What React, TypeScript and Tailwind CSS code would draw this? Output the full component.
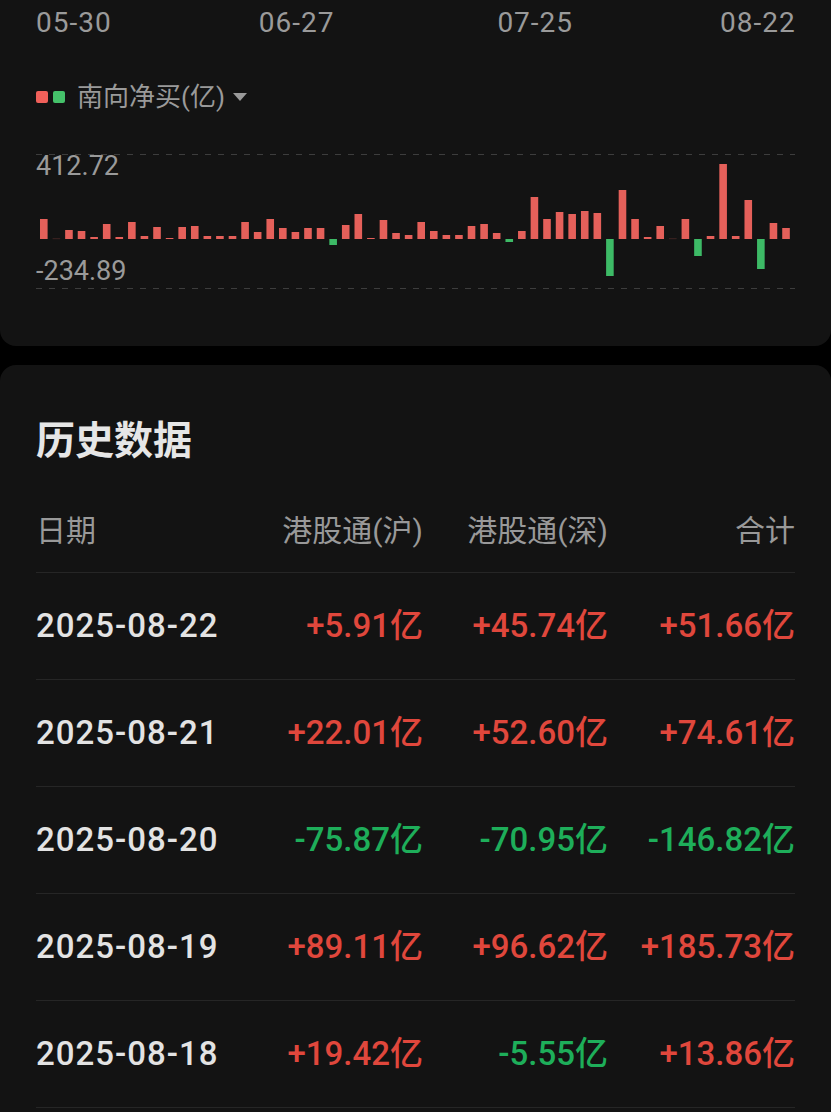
const FONT = "font-['Roboto','Noto_Sans_CJK_SC',sans-serif]";

// bar heights in px above (+) / below (-) the zero line, left to right
const BARS = [
  20, 0, 9, 8, 2, 15, 2, 17, 3, 12, 1, 12, 13, 3, 3, 3, 17, 7, 20, 11,
  7, 11, 11, -6, 14, 25, 1, 19, 6, 4, 17, 8, 4, 4, 13, 15, 6, -3, 8, 42,
  20, 27, 25, 28, 26, -37, 49, 20, 2, 13, 0, 20, -17, 3, 75, 3, 39, -30, 16, 11,
];

const ROWS = [
  { date: "2025-08-22", sh: "+5.91亿", sz: "+45.74亿", total: "+51.66亿" },
  { date: "2025-08-21", sh: "+22.01亿", sz: "+52.60亿", total: "+74.61亿" },
  { date: "2025-08-20", sh: "-75.87亿", sz: "-70.95亿", total: "-146.82亿" },
  { date: "2025-08-19", sh: "+89.11亿", sz: "+96.62亿", total: "+185.73亿" },
  { date: "2025-08-18", sh: "+19.42亿", sz: "-5.55亿", total: "+13.86亿" },
];

function valueColor(v: string) {
  return v.startsWith("-") ? "text-[#1eae5a]" : "text-[#e0473c]";
}

function Chart() {
  const zero = 89;
  return (
    <div className="relative mt-[38px] h-[142px] w-[759px]">
      <svg width="759" height="142" viewBox="0 0 759 142" className="block">
        <line x1="0" y1="4.5" x2="759" y2="4.5" stroke="#3d3d3d" strokeWidth="1" strokeDasharray="6 7" />
        <line x1="0" y1="138.5" x2="759" y2="138.5" stroke="#3d3d3d" strokeWidth="1" strokeDasharray="6 7" />
        {BARS.map((h, i) => {
          const x = 4 + i * 12.58;
          if (h === 0) {
            return <rect key={i} x={x} y={zero - 0.5} width={7.6} height={0.6} fill="#5a2f2c" />;
          }
          return h > 0 ? (
            <rect key={i} x={x} y={zero - h} width={7.6} height={h} fill="#e5605a" />
          ) : (
            <rect key={i} x={x} y={zero} width={7.6} height={-h} fill="#3dba66" />
          );
        })}
      </svg>
      <span className="absolute left-0 top-[3px] text-[27px] leading-none text-[#9a9a9a]">412.72</span>
      <span className="absolute left-0 top-[108px] text-[27px] leading-none text-[#9a9a9a]">-234.89</span>
    </div>
  );
}

export default function App() {
  return (
    <div className={`h-[1112px] w-[831px] overflow-hidden bg-black ${FONT}`}>
      {/* Chart card */}
      <div className="h-[346px] rounded-b-[16px] bg-[#131313] px-[36px]">
        <div className="flex h-[46px] items-center whitespace-nowrap text-[28px] leading-none tracking-[1px] text-[#9a9a9a]">
          <span className="shrink-0">05-30</span>
          <span className="ml-[147px] shrink-0">06-27</span>
          <span className="ml-[163px] shrink-0">07-25</span>
          <span className="ml-[147px] shrink-0">08-22</span>
        </div>

        <div className="mt-[36px] flex h-[30px] items-center">
          <span className="h-[12px] w-[12px] rounded-[2px] bg-[#f0605a]" />
          <span className="ml-[5px] h-[12px] w-[12px] rounded-[2px] bg-[#45c26a]" />
          <span className="ml-[12px] text-[26px] leading-none text-[#9a9a9a]">南向净买(亿)</span>
          <svg width="14" height="8" viewBox="0 0 14 8" className="ml-[8px]">
            <path d="M0 0 H14 L7 8 Z" fill="#9a9a9a" />
          </svg>
        </div>

        <Chart />
      </div>

      {/* History card */}
      <div className="mt-[19px] h-[760px] rounded-t-[16px] bg-[#131313] px-[36px]">
        <div className="flex h-[124px] items-end pb-[32px]">
          <h2 className="font-['Noto_Sans_CJK_SC',sans-serif] text-[39px] font-bold leading-[40px] text-[#e6e6e6]">
            历史数据
          </h2>
        </div>

        <div className="grid h-[84px] grid-cols-[202px_185px_185px_187px] items-center border-b border-[#262626] text-[30px] text-[#999999]">
          <span>日期</span>
          <span className="text-right">港股通(沪)</span>
          <span className="text-right">港股通(深)</span>
          <span className="text-right">合计</span>
        </div>

        {ROWS.map((r) => (
          <div
            key={r.date}
            className="grid h-[107px] grid-cols-[202px_185px_185px_187px] items-center border-b border-[#262626] text-[33px] font-medium"
          >
            <span className="tracking-[1px] text-[#e3e3e3]">{r.date}</span>
            <span className={`text-right ${valueColor(r.sh)}`}>{r.sh}</span>
            <span className={`text-right ${valueColor(r.sz)}`}>{r.sz}</span>
            <span className={`text-right ${valueColor(r.total)}`}>{r.total}</span>
          </div>
        ))}
      </div>
    </div>
  );
}
